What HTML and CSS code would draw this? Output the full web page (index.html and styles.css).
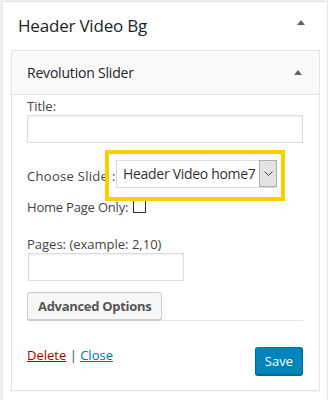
FILE: index.html
```html
<!DOCTYPE html>
<html lang="en">
<head>
    <meta charset="UTF-8">
    <meta name="viewport" content="width=device-width, initial-scale=1.0">
    <title>Header Video Bg</title>
    <link rel="stylesheet" href="styles.css">
</head>
<body>
    <div class="sidebar">
        <div class="sidebar-head">
            <h2>Header Video Bg</h2>
            <span class="caret"></span>
        </div>

        <div class="widget">
            <div class="widget-top">
                <h3>Revolution Slider</h3>
                <span class="caret"></span>
            </div>

            <div class="widget-inside">
                <p class="label first">Title:</p>
                <input class="text-input wide" type="text">

                <div class="slide-row">
                    <span class="row-label">Choose Slide :</span>
                    <div class="slide-pick">
                        <div class="select">
                            <span class="select-value">Header Video home7</span>
                            <span class="select-arrow">
                                <svg width="9" height="5" viewBox="0 0 9 5">
                                    <path d="M0.5 0.5 L4.5 4.5 L8.5 0.5" fill="none" stroke="#444" stroke-width="1"/>
                                </svg>
                            </span>
                        </div>
                        <div class="highlight"></div>
                    </div>
                </div>

                <div class="check-row">
                    <span class="check-label">Home Page Only:</span>
                    <span class="checkbox"></span>
                </div>

                <p class="label pages">Pages: (example: 2,10)</p>
                <input class="text-input short" type="text">

                <div class="advanced">
                    <button class="button">Advanced Options</button>
                </div>

                <div class="widget-control">
                    <div class="links">
                        <a href="#" class="delete">Delete</a> | <a href="#" class="close">Close</a>
                    </div>
                    <button class="button-primary">Save</button>
                </div>
            </div>
        </div>
    </div>
</body>
</html>
```

FILE: styles.css
```css
* {
    margin: 0;
    padding: 0;
    box-sizing: border-box;
}

body {
    background-color: #f1f1f1;
    font-family: "Open Sans", "Noto Sans", sans-serif;
    font-size: 13px;
    color: #444;
}

.sidebar {
    margin: 1px 0 0 2px;
    height: 399px;
    background-color: #fff;
    border: 1px solid #e5e5e5;
    border-bottom: none;
}

.sidebar-head {
    display: flex;
    justify-content: space-between;
    padding: 12px 22px 12px 15px;
}

.sidebar-head h2 {
    font-size: 17px;
    font-weight: 400;
    line-height: 24px;
    color: #1d2327;
    letter-spacing: -0.2px;
}

.caret {
    width: 0;
    height: 0;
    border-left: 4px solid transparent;
    border-right: 4px solid transparent;
    border-bottom: 5px solid #5f6368;
}

.sidebar-head .caret {
    margin-top: 6px;
}

.widget {
    margin: 0 7px 0 8px;
    border: 1px solid #e5e5e5;
    box-shadow: 0 1px 1px rgba(0, 0, 0, 0.04);
}

.widget-top {
    display: flex;
    justify-content: space-between;
    align-items: center;
    height: 44px;
    padding: 0 17px 0 15px;
    background-color: #fafafa;
    border-bottom: 1px solid #e5e5e5;
}

.widget-top h3 {
    font-size: 14px;
    font-weight: 400;
    color: #1d2327;
    letter-spacing: -0.2px;
}

.widget-inside {
    padding: 0 16px 15px 15px;
}

.label {
    line-height: 18px;
}

.label.first {
    margin-top: 2px;
}

.label.pages {
    margin-top: 20px;
    line-height: 17px;
}

.text-input {
    display: block;
    height: 28px;
    border: 1px solid #ddd;
    box-shadow: inset 0 1px 2px rgba(0, 0, 0, 0.07);
    background-color: #fff;
}

.text-input.wide {
    width: 100%;
}

.text-input.short {
    width: 156px;
    margin-left: 1px;
}

.slide-row {
    display: flex;
    align-items: center;
    margin-top: 17px;
}

.row-label {
    width: 89px;
    white-space: nowrap;
    line-height: 18px;
    margin-top: 3px;
    letter-spacing: 0.3px;
}

.slide-pick {
    position: relative;
}

.select {
    display: flex;
    width: 161px;
    height: 28px;
    border: 1px solid #ddd;
    border-right: none;
    background-color: #fff;
}

.select-value {
    flex: 1;
    padding-left: 6px;
    font-size: 14px;
    line-height: 26px;
    color: #333;
    white-space: nowrap;
    letter-spacing: -0.3px;
}

.select-arrow {
    display: flex;
    align-items: center;
    justify-content: center;
    width: 18px;
    height: 27px;
    margin-top: -1px;
    background-color: #e3e3e3;
    border: 1px solid #adadad;
}

.highlight {
    position: absolute;
    left: -11px;
    top: -10px;
    width: 180px;
    height: 51px;
    border: 4px solid #ffcc00;
}

.check-row {
    display: flex;
    align-items: center;
    margin-top: 10px;
    line-height: 18px;
}

.check-label {
    width: 106px;
    white-space: nowrap;
    letter-spacing: -0.2px;
}

.checkbox {
    width: 13px;
    height: 13px;
    border: 1px solid #333;
    margin-top: -2px;
}

.advanced {
    margin-top: 11px;
    border-bottom: 1px solid #e5e5e5;
}

.button {
    display: block;
    height: 28px;
    padding: 0 10px;
    font-family: inherit;
    font-size: 13px;
    font-weight: 700;
    color: #555;
    background-color: #f7f7f7;
    border: 1px solid #ccc;
    border-radius: 3px;
    box-shadow: 0 1px 0 #ccc;
    letter-spacing: -0.3px;
}

.widget-control {
    display: flex;
    justify-content: space-between;
    align-items: flex-start;
    margin-top: 26px;
}

.links {
    line-height: 18px;
    margin-top: -1px;
}

.delete {
    color: #a00;
}

.close {
    color: #0073aa;
}

.button-primary {
    height: 28px;
    padding: 0 9px;
    font-family: inherit;
    font-size: 13px;
    color: #fff;
    background-color: #0085ba;
    border: 1px solid #0073aa;
    border-color: #0073aa #006799 #006799;
    border-radius: 3px;
    box-shadow: 0 1px 0 #006799;
}
```
